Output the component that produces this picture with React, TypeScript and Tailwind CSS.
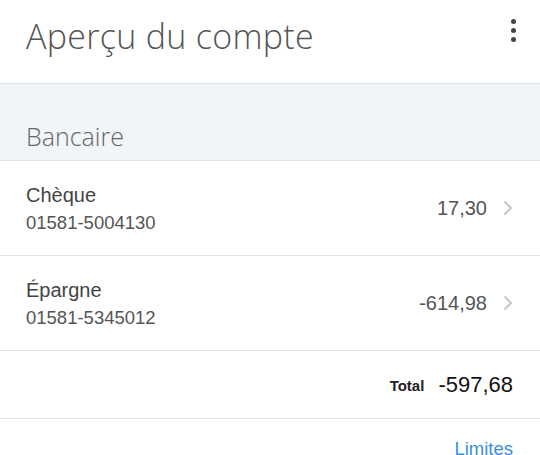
import React from "react";

type Account = { name: string; number: string; amount: string };

const accounts: Account[] = [
  { name: "Chèque", number: "01581-5004130", amount: "17,30" },
  { name: "Épargne", number: "01581-5345012", amount: "-614,98" },
];

const Chevron = () => (
  <svg width="10" height="16" viewBox="0 0 10 16" fill="none" className="shrink-0">
    <path d="M2 2l6 6-6 6" stroke="#c7c7cc" strokeWidth="2" strokeLinecap="round" strokeLinejoin="round" />
  </svg>
);

export default function App() {
  return (
    <div className="w-[540px] h-[455px] overflow-hidden bg-white font-['Liberation_Sans',Arial,sans-serif]">
      {/* header */}
      <div className="h-[84px] flex items-start justify-between pl-[26px] pr-[24px] border-b border-[#dde3e8]">
        <h1 className="mt-[12px] text-[34px] leading-[48px] font-light text-[#555] tracking-[0.3px] font-['Open_Sans',sans-serif]">
          Aperçu du compte
        </h1>
        <div className="mt-[19px] flex flex-col gap-[4px] items-center">
          <span className="w-[5px] h-[5px] rounded-full bg-[#444]" />
          <span className="w-[5px] h-[5px] rounded-full bg-[#444]" />
          <span className="w-[5px] h-[5px] rounded-full bg-[#444]" />
        </div>
      </div>

      {/* section header */}
      <div className="h-[77px] bg-[#f2f5f7] border-b border-[#dde3e8] flex items-end pl-[26px] pb-[8px]">
        <span className="text-[25px] leading-[32px] font-light text-[#666] font-['Open_Sans',sans-serif]">Bancaire</span>
      </div>

      {accounts.map((a) => (
        <div key={a.number} className="h-[95px] flex items-center justify-between pl-[26px] pr-[27px] border-b border-[#e2e2e2]">
          <div className="flex flex-col gap-[3px] mt-[1px]">
            <span className="text-[20px] leading-[25px] text-[#444]">{a.name}</span>
            <span className="text-[18.5px] leading-[24px] text-[#555]">{a.number}</span>
          </div>
          <div className="flex items-center gap-[16px]">
            <span className="text-[20px] leading-[24px] text-[#555]">{a.amount}</span>
            <Chevron />
          </div>
        </div>
      ))}

      {/* total */}
      <div className="h-[68px] flex items-center justify-end pr-[27px] border-b border-[#e2e2e2]">
        <span className="text-[15px] font-bold text-[#222] mr-[14px] mt-[3px]">Total</span>
        <span className="text-[22px] leading-[28px] text-[#111]">-597,68</span>
      </div>

      {/* limits */}
      <div className="flex justify-end pr-[27px] pt-[19px]">
        <span className="text-[18.5px] leading-[22px] text-[#3b8fdd]">Limites</span>
      </div>
    </div>
  );
}
